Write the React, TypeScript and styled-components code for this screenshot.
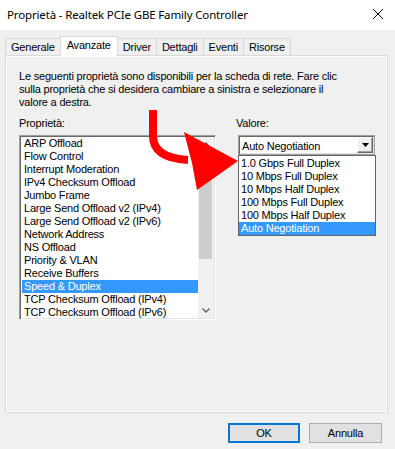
import React from "react";
import styled, { createGlobalStyle } from "styled-components";

const Global = createGlobalStyle`
  html, body { margin: 0; padding: 0; background: #f0f0f0; }
  #root { width: 395px; height: 449px; }
  * { box-sizing: border-box; }
`;

const Window = styled.div`
  position: relative;
  width: 395px;
  height: 449px;
  background: #f0f0f0;
  display: flex;
  flex-direction: column;
  font-family: "Liberation Sans", Arial, sans-serif;
  font-size: 11px;
  letter-spacing: -0.2px;
  color: #000;
  overflow: hidden;
`;

const TitleBar = styled.div`
  height: 30px;
  flex: none;
  background: #fff;
  display: flex;
  align-items: center;
  justify-content: space-between;
  padding: 0 0 2px 7px;
`;

const Title = styled.span`
  font-family: "Segoe UI", "Noto Sans", sans-serif;
  font-size: 11.5px;
  letter-spacing: -0.15px;
  color: #000;
  white-space: nowrap;
`;

const CloseBox = styled.div`
  width: 46px;
  height: 30px;
  display: flex;
  align-items: center;
  justify-content: center;
  margin-right: -6px;
`;

const Body = styled.div`
  flex: 1;
  display: flex;
  flex-direction: column;
  padding: 6px 7px 0 5px;
`;

const TabStrip = styled.div`
  height: 19px;
  display: flex;
  align-items: flex-end;
  position: relative;
  z-index: 1;
`;

const Tab = styled.div<{ $active?: boolean }>`
  height: ${(p) => (p.$active ? "20px" : "17px")};
  margin-bottom: ${(p) => (p.$active ? "-1px" : "0")};
  margin-left: -1px;
  padding: 0 ${(p) => (p.$active ? "6px" : "5px")} ${(p) => (p.$active ? "3px" : "0")};
  display: flex;
  align-items: center;
  border: 1px solid #d9d9d9;
  border-bottom: none;
  background: ${(p) => (p.$active ? "#fff" : "#f0f0f0")};
  white-space: nowrap;
  &:first-child { margin-left: 0; }
`;

const Panel = styled.div`
  height: 358px;
  border: 1px solid #d9d9d9;
  box-shadow: inset 1px 1px 0 #fff, inset -1px -1px 0 #fff;
  background: #f0f0f0;
  padding: 14px 13px 0 13px;
  display: flex;
  flex-direction: column;
`;

const Description = styled.p`
  margin: 0;
  line-height: 13px;
  width: 325px;
`;

const Columns = styled.div`
  margin-top: 8px;
  display: grid;
  grid-template-columns: 197px 140px;
  column-gap: 20px;
`;

const Column = styled.div`
  display: flex;
  flex-direction: column;
`;

const FieldLabel = styled.div`
  line-height: 13px;
  height: 13px;
  margin-bottom: 5px;
`;

const ListBox = styled.div`
  height: 185px;
  border-top: 1px solid #a0a0a0;
  border-left: 1px solid #a0a0a0;
  border-right: 1px solid #fff;
  border-bottom: 1px solid #fff;
  box-shadow: inset 1px 1px 0 #696969, inset -1px -1px 0 #e3e3e3;
  background: #fff;
  padding: 1px 1px 0 2px;
  display: flex;
`;

const Items = styled.div`
  flex: 1;
  display: flex;
  flex-direction: column;
`;

const Item = styled.div<{ $selected?: boolean }>`
  height: 13px;
  flex: none;
  line-height: 13px;
  padding-left: 2px;
  white-space: nowrap;
  background: ${(p) => (p.$selected ? "#3399ff" : "transparent")};
  color: ${(p) => (p.$selected ? "#fff" : "#000")};
`;

const ScrollBar = styled.div`
  width: 16px;
  flex: none;
  background: #f0f0f0;
  display: flex;
  flex-direction: column;
  margin: 0 0 1px 0;
`;

const ScrollArrow = styled.div<{ $h: number }>`
  height: ${(p) => p.$h}px;
  flex: none;
  display: flex;
  align-items: center;
  justify-content: center;
`;

const ScrollTrack = styled.div`
  flex: 1;
  display: flex;
  flex-direction: column;
`;

const Thumb = styled.div`
  height: 108px;
  margin: 0 2px 0 1px;
  background: #cdcdcd;
`;

const ComboWrap = styled.div`
  position: relative;
  margin-left: 2px;
  width: 137px;
`;

const Combo = styled.div`
  height: 20px;
  border: 1px solid #a0a0a0;
  box-shadow: inset 1px 1px 0 #696969, inset -1px -1px 0 #e3e3e3;
  background: #fff;
  display: flex;
  align-items: center;
  padding: 2px 1px 0 3px;
`;

const ComboText = styled.span`
  flex: 1;
  white-space: nowrap;
`;

const ComboButton = styled.div`
  width: 16px;
  height: 16px;
  margin-top: -2px;
  background: #f0f0f0;
  border-top: 1px solid #fff;
  border-left: 1px solid #fff;
  border-right: 1px solid #696969;
  border-bottom: 1px solid #696969;
  box-shadow: inset -1px -1px 0 #a0a0a0;
  display: flex;
  align-items: center;
  justify-content: center;
`;

const DropList = styled.div`
  position: absolute;
  top: 20px;
  left: 0;
  width: 138px;
  border: 1px solid #646464;
  background: #fff;
  padding-top: 1px;
  display: flex;
  flex-direction: column;
  z-index: 2;
`;

const DropItem = styled.div<{ $selected?: boolean }>`
  height: 13px;
  line-height: 13px;
  padding-left: 2px;
  white-space: nowrap;
  background: ${(p) => (p.$selected ? "#3399ff" : "transparent")};
  color: ${(p) => (p.$selected ? "#fff" : "#000")};
`;

const Footer = styled.div`
  display: flex;
  justify-content: flex-end;
  gap: 9px;
  padding: 10px 6px 0 0;
`;

const Button = styled.button<{ $default?: boolean }>`
  height: 20px;
  width: ${(p) => (p.$default ? "72px" : "73px")};
  background: #e1e1e1;
  border: ${(p) => (p.$default ? "2px solid #0078d7" : "1px solid #adadad")};
  font-family: "Liberation Sans", Arial, sans-serif;
  font-size: 11px;
  letter-spacing: -0.2px;
  color: #000;
  padding: 0;
  margin: 0;
`;

const Overlay = styled.svg`
  position: absolute;
  left: 0;
  top: 0;
  pointer-events: none;
  z-index: 5;
`;

const properties = [
  "ARP Offload",
  "Flow Control",
  "Interrupt Moderation",
  "IPv4 Checksum Offload",
  "Jumbo Frame",
  "Large Send Offload v2 (IPv4)",
  "Large Send Offload v2 (IPv6)",
  "Network Address",
  "NS Offload",
  "Priority & VLAN",
  "Receive Buffers",
  "Speed & Duplex",
  "TCP Checksum Offload (IPv4)",
  "TCP Checksum Offload (IPv6)",
];

const values = [
  "1.0 Gbps Full Duplex",
  "10 Mbps Full Duplex",
  "10 Mbps Half Duplex",
  "100 Mbps Full Duplex",
  "100 Mbps Half Duplex",
  "Auto Negotiation",
];

const tabs = ["Generale", "Avanzate", "Driver", "Dettagli", "Eventi", "Risorse"];

export default function App() {
  return (
    <>
      <Global />
      <Window>
        <TitleBar>
          <Title>Proprietà - Realtek PCIe GBE Family Controller</Title>
          <CloseBox>
            <svg width="12" height="12" viewBox="0 0 12 12">
              <path d="M1 1 L11 11 M11 1 L1 11" stroke="#000" strokeWidth="1" fill="none" />
            </svg>
          </CloseBox>
        </TitleBar>
        <Body>
          <TabStrip>
            {tabs.map((t) => (
              <Tab key={t} $active={t === "Avanzate"}>
                {t}
              </Tab>
            ))}
          </TabStrip>
          <Panel>
            <Description>
              Le seguenti proprietà sono disponibili per la scheda di rete. Fare clic
              sulla proprietà che si desidera cambiare a sinistra e selezionare il
              valore a destra.
            </Description>
            <Columns>
              <Column>
                <FieldLabel>Proprietà:</FieldLabel>
                <ListBox>
                  <Items>
                    {properties.map((p) => (
                      <Item key={p} $selected={p === "Speed & Duplex"}>
                        {p}
                      </Item>
                    ))}
                  </Items>
                  <ScrollBar>
                    <ScrollArrow $h={14}>
                      <svg width="8" height="5" viewBox="0 0 8 5">
                        <path d="M0.5 4.5 L4 1 L7.5 4.5" stroke="#606060" strokeWidth="1.4" fill="none" />
                      </svg>
                    </ScrollArrow>
                    <ScrollTrack>
                      <Thumb />
                    </ScrollTrack>
                    <ScrollArrow $h={16}>
                      <svg width="8" height="5" viewBox="0 0 8 5">
                        <path d="M0.5 0.5 L4 4 L7.5 0.5" stroke="#606060" strokeWidth="1.4" fill="none" />
                      </svg>
                    </ScrollArrow>
                  </ScrollBar>
                </ListBox>
              </Column>
              <Column>
                <FieldLabel>Valore:</FieldLabel>
                <ComboWrap>
                  <Combo>
                    <ComboText>Auto Negotiation</ComboText>
                    <ComboButton>
                      <svg width="7" height="4" viewBox="0 0 7 4">
                        <path d="M0 0 L7 0 L3.5 4 Z" fill="#000" />
                      </svg>
                    </ComboButton>
                  </Combo>
                  <DropList>
                    {values.map((v) => (
                      <DropItem key={v} $selected={v === "Auto Negotiation"}>
                        {v}
                      </DropItem>
                    ))}
                  </DropList>
                </ComboWrap>
              </Column>
            </Columns>
          </Panel>
          <Footer>
            <Button $default>OK</Button>
            <Button>Annulla</Button>
          </Footer>
        </Body>
        <Overlay width="395" height="449" viewBox="0 0 395 449">
          <path
            d="M153 110 L153 136 Q153 158 188 160"
            stroke="#ff0000"
            strokeWidth="8"
            fill="none"
            strokeLinecap="butt"
          />
          <path d="M184 132 L238 161 L197 190 L192 163 Z" fill="#ff0000" />
        </Overlay>
      </Window>
    </>
  );
}
